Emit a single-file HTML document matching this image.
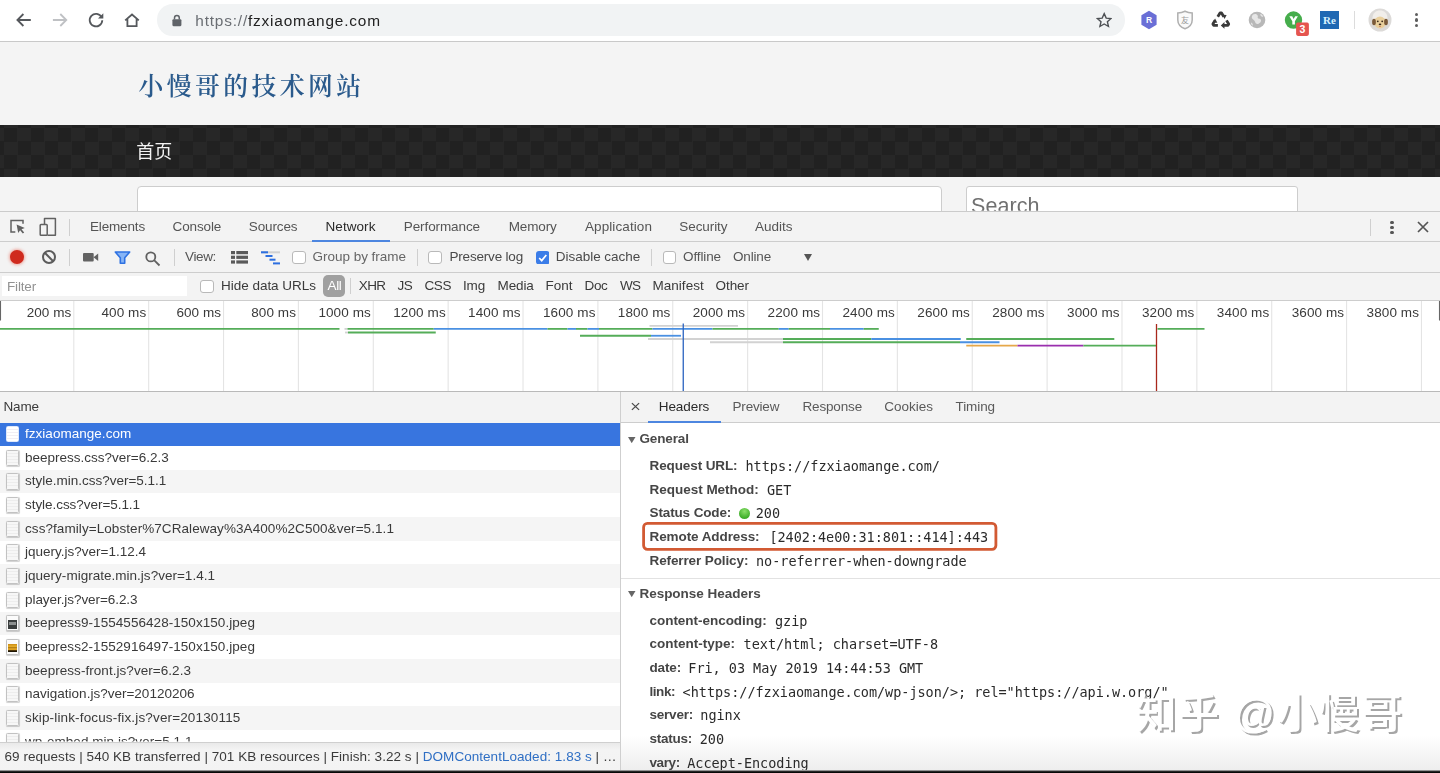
<!DOCTYPE html>
<html lang="zh"><head><meta charset="utf-8"><title>fzxiaomange.com - DevTools</title>
<style>
*{box-sizing:border-box;margin:0;padding:0}
html,body{width:1440px;height:773px;overflow:hidden;background:#fff}
body{position:relative;font-family:"Liberation Sans","Noto Sans CJK SC",sans-serif}
.a{position:absolute}
.t{position:absolute;white-space:nowrap;display:block}
#chrome{left:0;top:0;width:1440px;height:42px;background:#fff;border-bottom:1px solid #c9c9c9}
#pill{left:157.3px;top:4.4px;width:968px;height:31.4px;border-radius:15.7px;background:#f1f3f4}
#page{left:0;top:42px;width:1440px;height:170px;background:#f4f4f4;overflow:hidden}
#nav{left:0;top:83px;width:1440px;height:52px;background-color:#232323;
 background-image:repeating-conic-gradient(#272727 0 25%,#212121 0 50%);background-size:27px 27px;background-position:4px 3px}
#content{left:137px;top:144px;width:805px;height:40px;background:#fff;border:1px solid #cdcdcd;border-radius:4px}
#search{left:966px;top:144px;width:332px;height:40px;background:#fff;border:1px solid #cdcdcd;border-radius:3px}
#dt{left:0;top:211px;width:1440px;height:562px;background:#fff}
.bar{left:0;width:1440px;background:#f3f3f3}
#tabs{top:0;height:31px;border-top:1px solid #cbcbcb;border-bottom:1px solid #cdcdcd}
#ntb{top:31px;height:31px;border-bottom:1px solid #cdcdcd}
#flt{top:62px;height:28px;border-bottom:1px solid #cdcdcd}
#ovw{left:0;top:90px;width:1440px;height:91px;background:#fff;border-bottom:1px solid #b9b9b9;overflow:hidden}
.g{position:absolute;top:0;width:1px;height:90px;background:#e2e2e2}
.ln{position:absolute;height:1.6px}
.cb{position:absolute;width:13.5px;height:13.5px;border:1px solid #b9b9b9;border-radius:3px;background:#fff}
.sep{position:absolute;width:1px;background:#cfcfcf}
#lhead{left:0;top:181px;width:620px;height:30.5px;background:#f3f3f3}
#dhead{left:621px;top:181px;width:819px;height:31px;background:#f3f3f3;border-bottom:1px solid #cdcdcd}
.row{position:absolute;left:0;width:620px;height:23.65px}
.fi{position:absolute;left:5.65px;width:13.35px;height:16.3px;border:1px solid #c2c2c2;border-radius:1.5px;background:repeating-linear-gradient(#f7f7f7 0,#f7f7f7 2.2px,#ededed 2.2px,#ededed 3.1px);box-shadow:.5px .8px .8px rgba(0,0,0,.18);z-index:2}
#status{left:0;top:530.5px;width:621px;height:29px;background:linear-gradient(#e9e9e9,#f4f4f4 25%,#f3f3f3);border-top:1px solid #cfcfcf;z-index:5}
#vdiv{left:620px;top:181px;width:1px;height:381px;background:#cfcfcf;z-index:6}
#bottom{left:0;top:770px;width:1440px;height:3px;background:linear-gradient(#d8d8d8 0,#666 28%,#161616 55%,#000);z-index:9}
#fade{left:621px;top:735px;width:819px;height:35px;background:linear-gradient(rgba(238,238,238,0),rgba(236,236,236,.9))}
#wm{position:absolute;left:1136px;top:685.5px;font:500 40.5px/56px "Liberation Sans","Noto Sans CJK SC",sans-serif;color:#fff;text-shadow:2px 2px 0.6px #a6a6a6;white-space:nowrap;z-index:8;letter-spacing:1.9px}

#tx{position:absolute;left:0;top:0;width:1440px;height:773px;z-index:7;will-change:transform}

</style></head>
<body>
<div class="a" id="chrome"><div class="a" id="pill"></div>
<svg class="a" style="left:14px;top:11px" width="20" height="18" viewBox="0 0 20 18" fill="none" stroke="#55585c" stroke-width="1.800"><path d="M16.800 9H3.600M9.400 3L3.400 9l6 6"/></svg>
<svg class="a" style="left:50px;top:11px" width="20" height="18" viewBox="0 0 20 18" fill="none" stroke="#bfc1c4" stroke-width="1.800"><path d="M2.900 9h13.200M10.300 3l6 6-6 6"/></svg>
<svg class="a" style="left:86px;top:10px" width="20" height="20" viewBox="0 0 20 20" fill="none" stroke="#55585c" stroke-width="1.800"><path d="M15.600 7.200A6.300 6.300 0 1 0 16.300 10.300"/><path d="M17.300 3.200v5.300h-5.300z" fill="#55585c" stroke="none"/></svg>
<svg class="a" style="left:122px;top:10px" width="20" height="20" viewBox="0 0 20 20" fill="none" stroke="#55585c" stroke-width="1.800" stroke-linejoin="miter"><path d="M3.200 10.400L10 4.500l6.800 5.900M5.400 9v7.100h9.200V9"/></svg>
<svg class="a" style="left:171px;top:13px" width="12" height="14" viewBox="0 0 12 14"><rect x="1.400" y="6.200" width="9" height="7" rx="1.100" fill="#5f6368"/><path d="M3.500 6.500V4.950a2.400 2.400 0 0 1 4.800 0V6.500" fill="none" stroke="#5f6368" stroke-width="1.500"/></svg>
<svg class="a" style="left:1096.100px;top:12.200px" width="16.400" height="16.400" viewBox="0 0 18 18"><path d="M9 1.8l2.2 4.9 5.3.5-4 3.5 1.2 5.2L9 13.2l-4.7 2.7 1.2-5.2-4-3.5 5.3-.5z" fill="none" stroke="#4d5054" stroke-width="1.5" stroke-linejoin="miter"/></svg>
<svg class="a" style="left:1140px;top:10px" width="18" height="20" viewBox="0 0 18 20"><path d="M9 .8l7.6 4.4v9.6L9 19.2l-7.6-4.4V5.200z" fill="#6a6fd6"/><text x="9" y="13.4" font-family="Liberation Sans,sans-serif" font-weight="700" font-size="8.5" fill="#fff" text-anchor="middle">R</text></svg>
<svg class="a" style="left:1176px;top:10px" width="18" height="20" viewBox="0 0 18 20"><path d="M9 1.2c2.6 1.2 4.7 1.6 7.2 1.7v7c0 4.300-3.200 7.300-7.200 8.900-4-1.600-7.200-4.600-7.200-8.900v-7C4.300 2.800 6.400 2.400 9 1.200z" fill="#fafafa" stroke="#b0b0b0" stroke-width="1.500"/><text x="9" y="12.600" font-family="Liberation Sans,Noto Sans CJK SC,sans-serif" font-size="8" fill="#9a9a9a" text-anchor="middle">友</text></svg>
<svg class="a" style="left:1210.300px;top:9.700px" width="21.600" height="21.600" viewBox="0 0 20 20"><g fill="none" stroke="#3a3a3a" stroke-width="2.6" stroke-linejoin="round"><path d="M7.2 6.2L9.3 2.700h1.400l2.100 3.500"/><path d="M15.300 9.600l2 3.400-.7 1.300h-3.900"/><path d="M7.300 14.300H3.400l-.7-1.300 2-3.400"/></g><path d="M11.300 4.400l4.100.2-1.900 3.700zM13.400 11.200v6.200l-3.400-3.100zM2.300 11.500l2.400-3.600 2.100 3.900z" fill="#3a3a3a"/></svg>
<svg class="a" style="left:1248px;top:10.700px" width="18" height="18" viewBox="0 0 18 18"><circle cx="9" cy="9" r="8.300" fill="#b8b8b8"/><path d="M5 3.500c2-1 3.500-.5 4.500.8s-.5 2.200.5 3 2.500.2 3 1.700-1 3-2.500 3.800-3-.3-3.500-2S5.500 9 4.500 8 3.500 5 5 3.500z" fill="#e6e6e6"/><path d="M12.500 3c1.200.3 2.300 1.400 2.800 2.500-.9.400-2 .1-2.500-.700s-.7-1.300-.3-1.800zM3 11.500c.8.200 1.600.9 1.800 1.800.1.700-.2 1.200-.5 1.500C3.500 14 3 12.700 3 11.500z" fill="#e6e6e6"/></svg>
<svg class="a" style="left:1284px;top:10px" width="27" height="27" viewBox="0 0 27 27"><circle cx="9.500" cy="10.050" r="8.700" fill="#46ad4c"/><path d="M5.300 6.200h2.900l1.400 2.900 1.600-2.900h2.700l-3 5.100v3.100H8.300v-3.100z" fill="#fff"/><rect x="12.100" y="12.600" width="12.800" height="13.300" rx="1.800" fill="#e5554f"/><text x="18.500" y="23.200" font-family="Liberation Sans,sans-serif" font-weight="700" font-size="10.500" fill="#fff" text-anchor="middle">3</text></svg>
<svg class="a" style="left:1320px;top:11px" width="19" height="18" viewBox="0 0 19 18"><rect width="19" height="18" fill="#1f68b3"/><text x="9.500" y="12.800" font-family="Liberation Serif,serif" font-weight="700" font-size="11" fill="#d8f2ff" text-anchor="middle">Re</text></svg>
<div class="sep" style="left:1354px;top:11px;height:18px;background:#dcdcdc"></div>
<svg class="a" style="left:1368.300px;top:8.300px" width="24" height="24" viewBox="0 0 24 24"><circle cx="12" cy="12" r="11.500" fill="#dcdad8"/><path d="M4.500 10c0-5 3.500-7.500 7.500-7.500s7.500 2.500 7.500 7.500c0 2-1 3-2 3.500H6.500c-1-.5-2-1.500-2-3.500z" fill="#f1eeea"/><ellipse cx="12" cy="14.500" rx="5.800" ry="6" fill="#e9cf9c"/><ellipse cx="6" cy="14" rx="1.900" ry="3.300" fill="#7a5a3a"/><ellipse cx="18" cy="14" rx="1.900" ry="3.300" fill="#7a5a3a"/><circle cx="9.800" cy="13.300" r=".9" fill="#3a2a1a"/><circle cx="14.200" cy="13.300" r=".9" fill="#3a2a1a"/><ellipse cx="12" cy="16.300" rx="1.300" ry=".9" fill="#3a2a1a"/><path d="M10.800 18.200q1.200 1.600 2.400 0" fill="#c5584a"/></svg>
<div class="a" style="left:1414.600px;top:12.9px;width:3.400px;height:3.400px;border-radius:50%;background:#5f5f5f"></div>
<div class="a" style="left:1414.600px;top:18.3px;width:3.400px;height:3.400px;border-radius:50%;background:#5f5f5f"></div>
<div class="a" style="left:1414.600px;top:24.0px;width:3.400px;height:3.400px;border-radius:50%;background:#5f5f5f"></div>
</div>
<div class="a" id="page"><div class="a" id="nav"></div><div class="a" id="content"></div><div class="a" id="search"></div></div>
<div class="a" id="dt">
<div class="a bar" id="tabs"></div><div class="a bar" id="ntb"></div><div class="a bar" id="flt"></div>
<svg class="a" style="left:8px;top:6px" width="20" height="20" viewBox="0 0 20 20" fill="none" stroke="#616161" stroke-width="1.500"><path d="M15 6.700V3.600H3v11.300h4.300"/><path d="M8.600 7.600l8.200 3.400-3.300 1.200 2.700 3.200-1.400 1.200-2.700-3.300-1.900 2.800z" fill="#616161" stroke="none"/></svg>
<svg class="a" style="left:38px;top:5px" width="20" height="22" viewBox="0 0 20 22" fill="none" stroke="#616161" stroke-width="1.500"><path d="M6.500 8.300V2.600h10.900v16.600H9.500" stroke-linejoin="round"/><rect x="2.200" y="8.400" width="7" height="10.800" rx=".8" fill="#f3f3f3"/></svg>
<div class="sep" style="left:69px;top:7.500px;height:17px"></div>
<div class="a" style="left:312px;top:29.300px;width:77.500px;height:1.900px;background:#4d86e0"></div>
<div class="sep" style="left:1370px;top:7.500px;height:17px"></div>
<div class="a" style="left:1390.400px;top:9.7px;width:3.200px;height:3.200px;border-radius:50%;background:#555"></div>
<div class="a" style="left:1390.400px;top:14.7px;width:3.200px;height:3.200px;border-radius:50%;background:#555"></div>
<div class="a" style="left:1390.400px;top:19.7px;width:3.200px;height:3.200px;border-radius:50%;background:#555"></div>
<svg class="a" style="left:1416px;top:9px" width="14" height="14" viewBox="0 0 14 14" stroke="#555" stroke-width="1.700"><path d="M2 2l10 10M12 2L2 12"/></svg>
<div class="a" style="left:9.500px;top:38.800px;width:14.500px;height:14.500px;border-radius:50%;background:#cf2a1e;box-shadow:0 0 3px 1px rgba(230,80,60,.45)"></div>
<svg class="a" style="left:41px;top:37.800px" width="16" height="16" viewBox="0 0 16 16" fill="none" stroke="#5c5c5c" stroke-width="2"><circle cx="8" cy="8" r="6"/><path d="M3.800 3.800l8.400 8.400"/></svg>
<div class="sep" style="left:69px;top:37.500px;height:17.500px"></div>
<svg class="a" style="left:83px;top:41px" width="16" height="11" viewBox="0 0 16 11"><rect x="0" y=".9" width="10.700" height="8.700" rx="1" fill="#636363"/><path d="M10.500 5.200L15.200 1.600v7.300z" fill="#636363"/></svg>
<svg class="a" style="left:113.500px;top:39.500px" width="17" height="14" viewBox="0 0 17 14"><path d="M1.300 1h14.400l-5 5.800v5.500H6.300V6.800z" fill="#86b4f6" stroke="#2f72e2" stroke-width="1.600" stroke-linejoin="round"/></svg>
<svg class="a" style="left:145px;top:39.500px" width="17" height="16" viewBox="0 0 17 16" fill="none" stroke="#616161" stroke-width="1.800"><circle cx="5.800" cy="5.900" r="4.500"/><path d="M9.100 9.200l5.400 5.300"/></svg>
<div class="sep" style="left:174px;top:37.500px;height:17.500px"></div>
<svg class="a" style="left:230.500px;top:40px" width="17" height="13" viewBox="0 0 17 13" fill="#5a5a5a"><rect x="0" y="0" width="4" height="3.200"/><rect x="5.300" y="0" width="11.700" height="3.200"/><rect x="0" y="4.700" width="4" height="3.200"/><rect x="5.300" y="4.700" width="11.700" height="3.200"/><rect x="0" y="9.400" width="4" height="3.200"/><rect x="5.300" y="9.400" width="11.700" height="3.200"/></svg>
<svg class="a" style="left:261px;top:40px" width="19" height="14" viewBox="0 0 19 14"><rect x="0" y=".3" width="19" height="2" fill="#d0d0d0"/><rect x="0" y=".3" width="7" height="2" fill="#2d6fe0"/><rect x="4.500" y="4" width="7" height="2" fill="#2d6fe0"/><rect x="8.500" y="7.700" width="6" height="2" fill="#2d6fe0"/><rect x="12" y="11.400" width="7" height="2" fill="#2d6fe0"/></svg>
<div class="cb" style="left:292px;top:39.500px"></div>
<div class="sep" style="left:417px;top:37.500px;height:17.500px"></div>
<div class="cb" style="left:428px;top:39.500px"></div>
<svg class="a" style="left:535.500px;top:39.500px" width="13.500" height="13.500" viewBox="0 0 13.500 13.500"><rect width="13.500" height="13.500" rx="3" fill="#3b7de8"/><path d="M3.200 7l2.500 2.600 4.600-5.600" fill="none" stroke="#fff" stroke-width="1.700"/></svg>
<div class="sep" style="left:651px;top:37.500px;height:17.500px"></div>
<div class="cb" style="left:662.500px;top:39.500px"></div>
<svg class="a" style="left:803.500px;top:42.800px" width="8" height="7" viewBox="0 0 8 7"><path d="M0 0h8L4 7z" fill="#555"/></svg>
<div class="a" style="left:2px;top:65px;width:185px;height:20px;background:#fff"></div>
<div class="cb" style="left:200px;top:68.500px"></div>
<div class="a" style="left:323px;top:64px;width:22px;height:22px;border-radius:5px;background:#a0a0a0"></div>
<div class="sep" style="left:350px;top:67px;height:16px"></div>
<div class="a" id="ovw"><svg class="a" style="left:0;top:0" width="1440" height="90" viewBox="0 301 1440 90">
<g stroke="#e4e4e4" stroke-width="1.1">
<path d="M73.80 301V391"/>
<path d="M148.67 301V391"/>
<path d="M223.54 301V391"/>
<path d="M298.41 301V391"/>
<path d="M373.28 301V391"/>
<path d="M448.15 301V391"/>
<path d="M523.02 301V391"/>
<path d="M597.89 301V391"/>
<path d="M672.76 301V391"/>
<path d="M747.63 301V391"/>
<path d="M822.50 301V391"/>
<path d="M897.37 301V391"/>
<path d="M972.24 301V391"/>
<path d="M1047.11 301V391"/>
<path d="M1121.98 301V391"/>
<path d="M1196.85 301V391"/>
<path d="M1271.72 301V391"/>
<path d="M1346.59 301V391"/>
<path d="M1421.46 301V391"/>
</g>
<path d="M0.5 301V320.500M1439.500 301V320.500" stroke="#666" stroke-width="1.100"/>
<path d="M649.50 325.90H738.00" stroke="#d2d2d2" stroke-width="1.6"/>
<path d="M0.00 328.90H339.50" stroke="#55ad59" stroke-width="1.8"/>
<path d="M344.50 328.90H347.50" stroke="#d2d2d2" stroke-width="1.8"/>
<path d="M347.50 328.90H433.75" stroke="#55ad59" stroke-width="1.8"/>
<path d="M433.75 328.90H547.50" stroke="#4a90e2" stroke-width="1.8"/>
<path d="M547.50 328.90H567.50" stroke="#55ad59" stroke-width="1.8"/>
<path d="M567.50 328.90H576.00" stroke="#4a90e2" stroke-width="1.8"/>
<path d="M576.00 328.90H587.50" stroke="#55ad59" stroke-width="1.8"/>
<path d="M587.50 328.90H599.00" stroke="#4a90e2" stroke-width="1.8"/>
<path d="M599.00 328.90H652.50" stroke="#55ad59" stroke-width="1.8"/>
<path d="M652.50 328.90H712.50" stroke="#4a90e2" stroke-width="1.8"/>
<path d="M712.50 328.90H778.75" stroke="#55ad59" stroke-width="1.8"/>
<path d="M778.75 328.90H788.75" stroke="#4a90e2" stroke-width="1.8"/>
<path d="M788.75 328.90H830.00" stroke="#55ad59" stroke-width="1.8"/>
<path d="M830.00 328.90H863.75" stroke="#4a90e2" stroke-width="1.8"/>
<path d="M863.75 328.90H878.75" stroke="#55ad59" stroke-width="1.8"/>
<path d="M345.00 332.50H348.00" stroke="#d2d2d2" stroke-width="1.8"/>
<path d="M348.00 332.50H435.75" stroke="#55ad59" stroke-width="1.8"/>
<path d="M580.00 335.75H651.00" stroke="#55ad59" stroke-width="1.8"/>
<path d="M651.00 335.75H681.00" stroke="#4a90e2" stroke-width="1.8"/>
<path d="M648.00 339.00H783.00" stroke="#d2d2d2" stroke-width="1.8"/>
<path d="M783.00 339.00H871.25" stroke="#55ad59" stroke-width="1.8"/>
<path d="M871.25 339.00H960.75" stroke="#4a90e2" stroke-width="1.8"/>
<path d="M966.25 339.00H1114.30" stroke="#55ad59" stroke-width="1.8"/>
<path d="M710.00 342.25H783.00" stroke="#d2d2d2" stroke-width="1.8"/>
<path d="M783.00 342.25H960.00" stroke="#55ad59" stroke-width="1.8"/>
<path d="M960.00 342.25H999.50" stroke="#4a90e2" stroke-width="1.8"/>
<path d="M966.25 345.70H1017.50" stroke="#e6a84a" stroke-width="1.8"/>
<path d="M1017.50 345.70H1083.40" stroke="#9a2fae" stroke-width="1.8"/>
<path d="M1083.40 345.70H1156.50" stroke="#55ad59" stroke-width="1.8"/>
<path d="M1157.50 328.80H1204.50" stroke="#55ad59" stroke-width="1.8"/>
<path d="M683.250 323.500V391" stroke="#2a63c0" stroke-width="1.300"/>
<path d="M1156.500 324V391" stroke="#a8281c" stroke-width="1.300"/>
</svg></div>
<div class="a" id="lhead"></div><div class="a" id="dhead"></div>
<svg class="a" style="left:631px;top:191.400px" width="9" height="9" viewBox="0 0 9 9" stroke="#4a4a4a" stroke-width="1.300"><path d="M.9 1.100l7.200 6.800M8.100 1.100L.9 7.900"/></svg>
<div class="a" style="left:648px;top:209.800px;width:72.800px;height:1.900px;background:#4d86e0"></div>
<div class="row" style="top:211.50px;background:#3875df"></div>
<div class="fi" style="top:215.00px;border-color:#dfe8fb;background:repeating-linear-gradient(#fff 0,#fff 2.200px,#f1eef4 2.200px,#f1eef4 3.100px);box-shadow:none"></div>
<div class="row" style="top:235.15px;background:#fff"></div>
<div class="fi" style="top:238.65px"></div>
<div class="row" style="top:258.80px;background:#f5f5f5"></div>
<div class="fi" style="top:262.30px"></div>
<div class="row" style="top:282.45px;background:#fff"></div>
<div class="fi" style="top:285.95px"></div>
<div class="row" style="top:306.10px;background:#f5f5f5"></div>
<div class="fi" style="top:309.60px"></div>
<div class="row" style="top:329.75px;background:#fff"></div>
<div class="fi" style="top:333.25px"></div>
<div class="row" style="top:353.40px;background:#f5f5f5"></div>
<div class="fi" style="top:356.90px"></div>
<div class="row" style="top:377.05px;background:#fff"></div>
<div class="fi" style="top:380.55px"></div>
<div class="row" style="top:400.70px;background:#f5f5f5"></div>
<div class="fi" style="top:404.20px;background:#fbfbfb"><div style="position:absolute;left:1.350px;top:3.800px;width:9px;height:8.600px;background:#3a3d3d"></div><div style="position:absolute;left:2.300px;top:6.300px;width:7px;height:2.600px;background:#8d9090"></div></div>
<div class="row" style="top:424.35px;background:#fff"></div>
<div class="fi" style="top:427.85px;background:#fbfbfb"><div style="position:absolute;left:1.350px;top:3.800px;width:9px;height:8.600px;background:linear-gradient(#c98a14 0,#e7b02c 30%,#b07a10 45%,#e2a626 60%,#d99a1c 78%,#2a1c04 82%,#1a1204 100%)"></div></div>
<div class="row" style="top:448.00px;background:#f5f5f5"></div>
<div class="fi" style="top:451.50px"></div>
<div class="row" style="top:471.65px;background:#fff"></div>
<div class="fi" style="top:475.15px"></div>
<div class="row" style="top:495.30px;background:#f5f5f5"></div>
<div class="fi" style="top:498.80px"></div>
<div class="row" style="top:518.95px;background:#fff"></div>
<div class="fi" style="top:522.45px"></div>
<div class="row" style="top:542.60px;background:#f5f5f5"></div>
<div class="fi" style="top:546.10px"></div>
<div class="a" id="status"></div>
<div class="a" id="vdiv"></div>
<svg class="a" style="left:628px;top:226.100px" width="7.500" height="6.200" viewBox="0 0 7.500 6.200"><path d="M0 0h7.500L3.750 6.200z" fill="#666"/></svg>
<svg class="a" style="left:628px;top:380.300px" width="7.500" height="6.200" viewBox="0 0 7.500 6.200"><path d="M0 0h7.500L3.750 6.200z" fill="#666"/></svg>
<div class="a" style="left:621px;top:366.500px;width:819px;height:1px;background:#e2e2e2"></div>
<div class="a" style="left:739px;top:296.500px;width:11px;height:11px;border-radius:50%;background:radial-gradient(circle at 50% 30%,#8be06a,#3fae2a 70%)"></div>
<svg class="a" style="left:640px;top:309px" width="360" height="33" viewBox="640 520 360 33"><rect x="643.600" y="523.400" width="352.300" height="25.950" rx="3.800" fill="none" stroke="#d25a33" stroke-width="2.800"/></svg>
</div>
<div id="wm">知乎 @小慢哥</div>
<div class="a" id="fade"></div>
<div class="a" id="bottom"></div>
<div id="tx">
<span class="t" style="left:195.30px;top:10.76px;font:400 15.40px/20px 'Liberation Sans','Noto Sans CJK SC',sans-serif;color:#222;letter-spacing:0.812px;"><span style="color:#6a6e73">https://</span>fzxiaomange.com</span>
<span class="t" style="left:138.50px;top:76.61px;font:600 24.80px/20px 'Liberation Serif','Noto Serif CJK SC',serif;color:#2a5a8c;letter-spacing:3.451px;">小慢哥的技术网站</span>
<span class="t" style="left:136.30px;top:142.06px;font:400 18.00px/20px 'Liberation Sans','Noto Sans CJK SC',sans-serif;color:#f2f2f2;letter-spacing:0.000px;">首页</span>
<span class="t" style="left:971.00px;top:196.35px;font:400 21.50px/20px 'Liberation Sans','Noto Sans CJK SC',sans-serif;color:#707070;letter-spacing:0.062px;clip-path:inset(0 0 5.55px 0);">Search</span>
<span class="t" style="left:90.00px;top:216.52px;font:400 13.50px/20px 'Liberation Sans','Noto Sans CJK SC',sans-serif;color:#555;letter-spacing:-0.160px;">Elements</span>
<span class="t" style="left:172.50px;top:216.52px;font:400 13.50px/20px 'Liberation Sans','Noto Sans CJK SC',sans-serif;color:#555;letter-spacing:-0.112px;">Console</span>
<span class="t" style="left:248.75px;top:216.52px;font:400 13.50px/20px 'Liberation Sans','Noto Sans CJK SC',sans-serif;color:#555;letter-spacing:-0.112px;">Sources</span>
<span class="t" style="left:325.50px;top:216.52px;font:400 13.50px/20px 'Liberation Sans','Noto Sans CJK SC',sans-serif;color:#2a2a2a;letter-spacing:0.069px;">Network</span>
<span class="t" style="left:403.75px;top:216.52px;font:400 13.50px/20px 'Liberation Sans','Noto Sans CJK SC',sans-serif;color:#555;letter-spacing:-0.095px;">Performance</span>
<span class="t" style="left:508.75px;top:216.52px;font:400 13.50px/20px 'Liberation Sans','Noto Sans CJK SC',sans-serif;color:#555;letter-spacing:-0.128px;">Memory</span>
<span class="t" style="left:585.00px;top:216.52px;font:400 13.50px/20px 'Liberation Sans','Noto Sans CJK SC',sans-serif;color:#555;letter-spacing:0.087px;">Application</span>
<span class="t" style="left:679.25px;top:216.52px;font:400 13.50px/20px 'Liberation Sans','Noto Sans CJK SC',sans-serif;color:#555;letter-spacing:-0.066px;">Security</span>
<span class="t" style="left:755.00px;top:216.52px;font:400 13.50px/20px 'Liberation Sans','Noto Sans CJK SC',sans-serif;color:#555;letter-spacing:-0.005px;">Audits</span>
<span class="t" style="left:185.00px;top:246.92px;font:400 13.50px/20px 'Liberation Sans','Noto Sans CJK SC',sans-serif;color:#555;letter-spacing:-0.356px;">View:</span>
<span class="t" style="left:312.50px;top:246.92px;font:400 13.50px/20px 'Liberation Sans','Noto Sans CJK SC',sans-serif;color:#666;letter-spacing:-0.021px;">Group by frame</span>
<span class="t" style="left:449.50px;top:246.92px;font:400 13.50px/20px 'Liberation Sans','Noto Sans CJK SC',sans-serif;color:#4a4a4a;letter-spacing:-0.191px;">Preserve log</span>
<span class="t" style="left:555.75px;top:246.92px;font:400 13.50px/20px 'Liberation Sans','Noto Sans CJK SC',sans-serif;color:#4a4a4a;letter-spacing:-0.023px;">Disable cache</span>
<span class="t" style="left:683.00px;top:246.92px;font:400 13.50px/20px 'Liberation Sans','Noto Sans CJK SC',sans-serif;color:#555;letter-spacing:-0.112px;">Offline</span>
<span class="t" style="left:733.00px;top:246.92px;font:400 13.50px/20px 'Liberation Sans','Noto Sans CJK SC',sans-serif;color:#555;letter-spacing:-0.172px;">Online</span>
<span class="t" style="left:7.00px;top:277.12px;font:400 13.50px/20px 'Liberation Sans','Noto Sans CJK SC',sans-serif;color:#929292;letter-spacing:-0.167px;">Filter</span>
<span class="t" style="left:221.00px;top:276.32px;font:400 13.50px/20px 'Liberation Sans','Noto Sans CJK SC',sans-serif;color:#3a3a3a;letter-spacing:-0.022px;">Hide data URLs</span>
<span class="t" style="left:327.50px;top:276.32px;font:400 13.50px/20px 'Liberation Sans','Noto Sans CJK SC',sans-serif;color:#fff;letter-spacing:-0.339px;">All</span>
<span class="t" style="left:358.75px;top:276.32px;font:400 13.50px/20px 'Liberation Sans','Noto Sans CJK SC',sans-serif;color:#3a3a3a;letter-spacing:-0.589px;">XHR</span>
<span class="t" style="left:397.50px;top:276.32px;font:400 13.50px/20px 'Liberation Sans','Noto Sans CJK SC',sans-serif;color:#3a3a3a;letter-spacing:-0.383px;">JS</span>
<span class="t" style="left:424.50px;top:276.32px;font:400 13.50px/20px 'Liberation Sans','Noto Sans CJK SC',sans-serif;color:#3a3a3a;letter-spacing:-0.422px;">CSS</span>
<span class="t" style="left:463.00px;top:276.32px;font:400 13.50px/20px 'Liberation Sans','Noto Sans CJK SC',sans-serif;color:#3a3a3a;letter-spacing:-0.172px;">Img</span>
<span class="t" style="left:497.50px;top:276.32px;font:400 13.50px/20px 'Liberation Sans','Noto Sans CJK SC',sans-serif;color:#3a3a3a;letter-spacing:-0.106px;">Media</span>
<span class="t" style="left:545.50px;top:276.32px;font:400 13.50px/20px 'Liberation Sans','Noto Sans CJK SC',sans-serif;color:#3a3a3a;letter-spacing:-0.004px;">Font</span>
<span class="t" style="left:584.50px;top:276.32px;font:400 13.50px/20px 'Liberation Sans','Noto Sans CJK SC',sans-serif;color:#3a3a3a;letter-spacing:-0.339px;">Doc</span>
<span class="t" style="left:620.00px;top:276.32px;font:400 13.50px/20px 'Liberation Sans','Noto Sans CJK SC',sans-serif;color:#3a3a3a;letter-spacing:-0.625px;">WS</span>
<span class="t" style="left:652.50px;top:276.32px;font:400 13.50px/20px 'Liberation Sans','Noto Sans CJK SC',sans-serif;color:#3a3a3a;letter-spacing:0.027px;">Manifest</span>
<span class="t" style="left:715.50px;top:276.32px;font:400 13.50px/20px 'Liberation Sans','Noto Sans CJK SC',sans-serif;color:#3a3a3a;letter-spacing:-0.053px;">Other</span>
<span class="t" style="left:26.65px;top:303.12px;font:400 13.50px/20px 'Liberation Sans','Noto Sans CJK SC',sans-serif;color:#3a3a3a;letter-spacing:0.078px;">200 ms</span>
<span class="t" style="left:101.52px;top:303.12px;font:400 13.50px/20px 'Liberation Sans','Noto Sans CJK SC',sans-serif;color:#3a3a3a;letter-spacing:0.078px;">400 ms</span>
<span class="t" style="left:176.39px;top:303.12px;font:400 13.50px/20px 'Liberation Sans','Noto Sans CJK SC',sans-serif;color:#3a3a3a;letter-spacing:0.078px;">600 ms</span>
<span class="t" style="left:251.26px;top:303.12px;font:400 13.50px/20px 'Liberation Sans','Noto Sans CJK SC',sans-serif;color:#3a3a3a;letter-spacing:0.078px;">800 ms</span>
<span class="t" style="left:318.38px;top:303.12px;font:400 13.50px/20px 'Liberation Sans','Noto Sans CJK SC',sans-serif;color:#3a3a3a;letter-spacing:0.103px;">1000 ms</span>
<span class="t" style="left:393.25px;top:303.12px;font:400 13.50px/20px 'Liberation Sans','Noto Sans CJK SC',sans-serif;color:#3a3a3a;letter-spacing:0.103px;">1200 ms</span>
<span class="t" style="left:468.12px;top:303.12px;font:400 13.50px/20px 'Liberation Sans','Noto Sans CJK SC',sans-serif;color:#3a3a3a;letter-spacing:0.103px;">1400 ms</span>
<span class="t" style="left:542.99px;top:303.12px;font:400 13.50px/20px 'Liberation Sans','Noto Sans CJK SC',sans-serif;color:#3a3a3a;letter-spacing:0.103px;">1600 ms</span>
<span class="t" style="left:617.86px;top:303.12px;font:400 13.50px/20px 'Liberation Sans','Noto Sans CJK SC',sans-serif;color:#3a3a3a;letter-spacing:0.103px;">1800 ms</span>
<span class="t" style="left:692.73px;top:303.12px;font:400 13.50px/20px 'Liberation Sans','Noto Sans CJK SC',sans-serif;color:#3a3a3a;letter-spacing:0.103px;">2000 ms</span>
<span class="t" style="left:767.60px;top:303.12px;font:400 13.50px/20px 'Liberation Sans','Noto Sans CJK SC',sans-serif;color:#3a3a3a;letter-spacing:0.103px;">2200 ms</span>
<span class="t" style="left:842.47px;top:303.12px;font:400 13.50px/20px 'Liberation Sans','Noto Sans CJK SC',sans-serif;color:#3a3a3a;letter-spacing:0.103px;">2400 ms</span>
<span class="t" style="left:917.34px;top:303.12px;font:400 13.50px/20px 'Liberation Sans','Noto Sans CJK SC',sans-serif;color:#3a3a3a;letter-spacing:0.103px;">2600 ms</span>
<span class="t" style="left:992.21px;top:303.12px;font:400 13.50px/20px 'Liberation Sans','Noto Sans CJK SC',sans-serif;color:#3a3a3a;letter-spacing:0.103px;">2800 ms</span>
<span class="t" style="left:1067.08px;top:303.12px;font:400 13.50px/20px 'Liberation Sans','Noto Sans CJK SC',sans-serif;color:#3a3a3a;letter-spacing:0.103px;">3000 ms</span>
<span class="t" style="left:1141.95px;top:303.12px;font:400 13.50px/20px 'Liberation Sans','Noto Sans CJK SC',sans-serif;color:#3a3a3a;letter-spacing:0.103px;">3200 ms</span>
<span class="t" style="left:1216.82px;top:303.12px;font:400 13.50px/20px 'Liberation Sans','Noto Sans CJK SC',sans-serif;color:#3a3a3a;letter-spacing:0.103px;">3400 ms</span>
<span class="t" style="left:1291.69px;top:303.12px;font:400 13.50px/20px 'Liberation Sans','Noto Sans CJK SC',sans-serif;color:#3a3a3a;letter-spacing:0.103px;">3600 ms</span>
<span class="t" style="left:1366.56px;top:303.12px;font:400 13.50px/20px 'Liberation Sans','Noto Sans CJK SC',sans-serif;color:#3a3a3a;letter-spacing:0.103px;">3800 ms</span>
<span class="t" style="left:3.50px;top:396.57px;font:400 13.50px/20px 'Liberation Sans','Noto Sans CJK SC',sans-serif;color:#3a3a3a;letter-spacing:-0.191px;">Name</span>
<span class="t" style="left:658.75px;top:396.57px;font:400 13.50px/20px 'Liberation Sans','Noto Sans CJK SC',sans-serif;color:#2a2a2a;letter-spacing:-0.076px;">Headers</span>
<span class="t" style="left:732.50px;top:396.57px;font:400 13.50px/20px 'Liberation Sans','Noto Sans CJK SC',sans-serif;color:#5a5a5a;letter-spacing:-0.181px;">Preview</span>
<span class="t" style="left:802.50px;top:396.57px;font:400 13.50px/20px 'Liberation Sans','Noto Sans CJK SC',sans-serif;color:#5a5a5a;letter-spacing:-0.162px;">Response</span>
<span class="t" style="left:884.25px;top:396.57px;font:400 13.50px/20px 'Liberation Sans','Noto Sans CJK SC',sans-serif;color:#5a5a5a;letter-spacing:-0.004px;">Cookies</span>
<span class="t" style="left:955.50px;top:396.57px;font:400 13.50px/20px 'Liberation Sans','Noto Sans CJK SC',sans-serif;color:#5a5a5a;letter-spacing:-0.086px;">Timing</span>
<span class="t" style="left:25.00px;top:424.12px;font:400 13.50px/20px 'Liberation Sans','Noto Sans CJK SC',sans-serif;color:#fff;letter-spacing:0.029px;">fzxiaomange.com</span>
<span class="t" style="left:25.00px;top:447.77px;font:400 13.50px/20px 'Liberation Sans','Noto Sans CJK SC',sans-serif;color:#3a3a3a;letter-spacing:0.001px;">beepress.css?ver=6.2.3</span>
<span class="t" style="left:25.00px;top:471.42px;font:400 13.50px/20px 'Liberation Sans','Noto Sans CJK SC',sans-serif;color:#3a3a3a;letter-spacing:-0.008px;">style.min.css?ver=5.1.1</span>
<span class="t" style="left:25.00px;top:495.07px;font:400 13.50px/20px 'Liberation Sans','Noto Sans CJK SC',sans-serif;color:#3a3a3a;letter-spacing:-0.049px;">style.css?ver=5.1.1</span>
<span class="t" style="left:25.00px;top:518.72px;font:400 13.50px/20px 'Liberation Sans','Noto Sans CJK SC',sans-serif;color:#3a3a3a;letter-spacing:0.071px;">css?family=Lobster%7CRaleway%3A400%2C500&amp;ver=5.1.1</span>
<span class="t" style="left:25.00px;top:542.37px;font:400 13.50px/20px 'Liberation Sans','Noto Sans CJK SC',sans-serif;color:#3a3a3a;letter-spacing:0.002px;">jquery.js?ver=1.12.4</span>
<span class="t" style="left:25.00px;top:566.02px;font:400 13.50px/20px 'Liberation Sans','Noto Sans CJK SC',sans-serif;color:#3a3a3a;letter-spacing:0.017px;">jquery-migrate.min.js?ver=1.4.1</span>
<span class="t" style="left:25.00px;top:589.67px;font:400 13.50px/20px 'Liberation Sans','Noto Sans CJK SC',sans-serif;color:#3a3a3a;letter-spacing:-0.063px;">player.js?ver=6.2.3</span>
<span class="t" style="left:25.00px;top:613.32px;font:400 13.50px/20px 'Liberation Sans','Noto Sans CJK SC',sans-serif;color:#3a3a3a;letter-spacing:0.054px;">beepress9-1554556428-150x150.jpeg</span>
<span class="t" style="left:25.00px;top:636.97px;font:400 13.50px/20px 'Liberation Sans','Noto Sans CJK SC',sans-serif;color:#3a3a3a;letter-spacing:0.054px;">beepress2-1552916497-150x150.jpeg</span>
<span class="t" style="left:25.00px;top:660.62px;font:400 13.50px/20px 'Liberation Sans','Noto Sans CJK SC',sans-serif;color:#3a3a3a;letter-spacing:0.047px;">beepress-front.js?ver=6.2.3</span>
<span class="t" style="left:25.00px;top:684.27px;font:400 13.50px/20px 'Liberation Sans','Noto Sans CJK SC',sans-serif;color:#3a3a3a;letter-spacing:0.009px;">navigation.js?ver=20120206</span>
<span class="t" style="left:25.00px;top:707.92px;font:400 13.50px/20px 'Liberation Sans','Noto Sans CJK SC',sans-serif;color:#3a3a3a;letter-spacing:0.150px;">skip-link-focus-fix.js?ver=20130115</span>
<span class="t" style="left:25.00px;top:731.57px;font:400 13.50px/20px 'Liberation Sans','Noto Sans CJK SC',sans-serif;color:#3a3a3a;letter-spacing:0.051px;clip-path:inset(0 0 9.97px 0);">wp-embed.min.js?ver=5.1.1</span>
<span class="t" style="left:4.50px;top:746.52px;font:400 13.50px/20px 'Liberation Sans','Noto Sans CJK SC',sans-serif;color:#3a3a3a;letter-spacing:0.039px;">69 requests | 540 KB transferred | 701 KB resources | Finish: 3.22 s | <span style="color:#2f6fc4">DOMContentLoaded: 1.83 s</span> | …</span>
<span class="t" style="left:639.50px;top:429.02px;font:700 13.50px/20px 'Liberation Sans','Noto Sans CJK SC',sans-serif;color:#4a4a4a;letter-spacing:-0.147px;">General</span>
<span class="t" style="left:639.40px;top:583.62px;font:700 13.50px/20px 'Liberation Sans','Noto Sans CJK SC',sans-serif;color:#4a4a4a;letter-spacing:-0.010px;">Response Headers</span>
<span class="t" style="left:649.50px;top:456.07px;font:700 13.50px/20px 'Liberation Sans','Noto Sans CJK SC',sans-serif;color:#454545;letter-spacing:-0.105px;">Request URL:</span>
<span class="t" style="left:745.50px;top:456.08px;font:400 13.50px/20px 'DejaVu Sans Mono','Liberation Mono',monospace;color:#2a2a2a;letter-spacing:-0.028px;">https://fzxiaomange.com/</span>
<span class="t" style="left:649.50px;top:479.72px;font:700 13.50px/20px 'Liberation Sans','Noto Sans CJK SC',sans-serif;color:#454545;letter-spacing:-0.017px;">Request Method:</span>
<span class="t" style="left:767.00px;top:479.73px;font:400 13.50px/20px 'DejaVu Sans Mono','Liberation Mono',monospace;color:#2a2a2a;letter-spacing:-0.030px;">GET</span>
<span class="t" style="left:649.50px;top:503.37px;font:700 13.50px/20px 'Liberation Sans','Noto Sans CJK SC',sans-serif;color:#454545;letter-spacing:-0.126px;">Status Code:</span>
<span class="t" style="left:755.75px;top:503.38px;font:400 13.50px/20px 'DejaVu Sans Mono','Liberation Mono',monospace;color:#2a2a2a;letter-spacing:-0.030px;">200</span>
<span class="t" style="left:649.50px;top:527.02px;font:700 13.50px/20px 'Liberation Sans','Noto Sans CJK SC',sans-serif;color:#454545;letter-spacing:-0.085px;">Remote Address:</span>
<span class="t" style="left:769.40px;top:527.03px;font:400 13.50px/20px 'DejaVu Sans Mono','Liberation Mono',monospace;color:#2a2a2a;letter-spacing:-0.028px;">[2402:4e00:31:801::414]:443</span>
<span class="t" style="left:649.50px;top:550.67px;font:700 13.50px/20px 'Liberation Sans','Noto Sans CJK SC',sans-serif;color:#454545;letter-spacing:-0.109px;">Referrer Policy:</span>
<span class="t" style="left:756.00px;top:550.68px;font:400 13.50px/20px 'DejaVu Sans Mono','Liberation Mono',monospace;color:#2a2a2a;letter-spacing:-0.028px;">no-referrer-when-downgrade</span>
<span class="t" style="left:649.50px;top:610.62px;font:700 13.50px/20px 'Liberation Sans','Noto Sans CJK SC',sans-serif;color:#454545;letter-spacing:-0.032px;">content-encoding:</span>
<span class="t" style="left:775.00px;top:610.63px;font:400 13.50px/20px 'DejaVu Sans Mono','Liberation Mono',monospace;color:#2a2a2a;letter-spacing:-0.029px;">gzip</span>
<span class="t" style="left:649.50px;top:634.27px;font:700 13.50px/20px 'Liberation Sans','Noto Sans CJK SC',sans-serif;color:#454545;letter-spacing:0.000px;">content-type:</span>
<span class="t" style="left:743.60px;top:634.28px;font:400 13.50px/20px 'DejaVu Sans Mono','Liberation Mono',monospace;color:#2a2a2a;letter-spacing:-0.028px;">text/html; charset=UTF-8</span>
<span class="t" style="left:649.50px;top:657.92px;font:700 13.50px/20px 'Liberation Sans','Noto Sans CJK SC',sans-serif;color:#454545;letter-spacing:-0.153px;">date:</span>
<span class="t" style="left:688.30px;top:657.93px;font:400 13.50px/20px 'DejaVu Sans Mono','Liberation Mono',monospace;color:#2a2a2a;letter-spacing:-0.028px;">Fri, 03 May 2019 14:44:53 GMT</span>
<span class="t" style="left:649.50px;top:681.57px;font:700 13.50px/20px 'Liberation Sans','Noto Sans CJK SC',sans-serif;color:#454545;letter-spacing:-0.453px;">link:</span>
<span class="t" style="left:682.60px;top:681.58px;font:400 13.50px/20px 'DejaVu Sans Mono','Liberation Mono',monospace;color:#2a2a2a;letter-spacing:-0.028px;">&lt;https://fzxiaomange.com/wp-json/&gt;; rel="https://api.w.org/"</span>
<span class="t" style="left:649.50px;top:705.22px;font:700 13.50px/20px 'Liberation Sans','Noto Sans CJK SC',sans-serif;color:#454545;letter-spacing:-0.221px;">server:</span>
<span class="t" style="left:700.30px;top:705.23px;font:400 13.50px/20px 'DejaVu Sans Mono','Liberation Mono',monospace;color:#2a2a2a;letter-spacing:-0.028px;">nginx</span>
<span class="t" style="left:649.50px;top:728.87px;font:700 13.50px/20px 'Liberation Sans','Noto Sans CJK SC',sans-serif;color:#454545;letter-spacing:-0.252px;">status:</span>
<span class="t" style="left:699.70px;top:728.88px;font:400 13.50px/20px 'DejaVu Sans Mono','Liberation Mono',monospace;color:#2a2a2a;letter-spacing:-0.030px;">200</span>
<span class="t" style="left:649.50px;top:752.52px;font:700 13.50px/20px 'Liberation Sans','Noto Sans CJK SC',sans-serif;color:#454545;letter-spacing:-0.396px;">vary:</span>
<span class="t" style="left:687.20px;top:752.53px;font:400 13.50px/20px 'DejaVu Sans Mono','Liberation Mono',monospace;color:#2a2a2a;letter-spacing:-0.028px;">Accept-Encoding</span>
</div>
</body></html>
